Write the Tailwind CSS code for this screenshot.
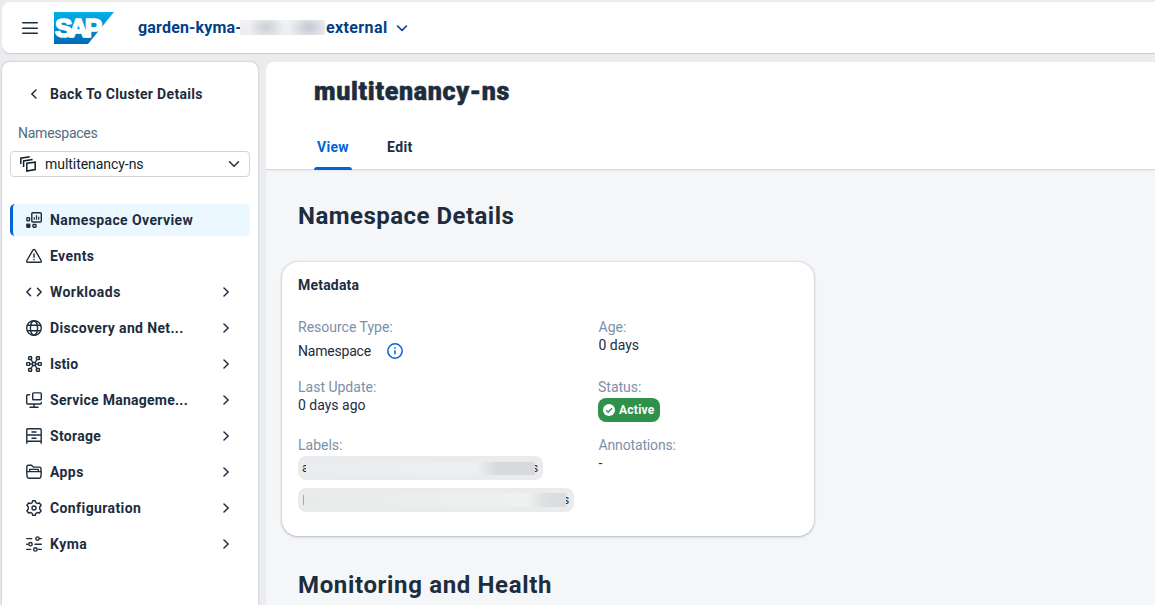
<!DOCTYPE html>
<html lang="en">
<head>
<meta charset="utf-8">
<title>multitenancy-ns</title>
<script src="https://cdn.jsdelivr.net/npm/@tailwindcss/browser@4"></script>
</head>
<body class="flex h-[605px] w-[1155px] flex-col overflow-hidden bg-[#ebecee] pl-[2px] pt-[2px] font-['Roboto',sans-serif] text-sm text-[#1d2d3e]">
<svg class="hidden">
  <symbol id="chev" viewBox="0 0 16 16"><path d="M6 4l4.200 4L6 12" fill="none" stroke="currentColor" stroke-width="1.500" stroke-linecap="round" stroke-linejoin="round"/></symbol>
</svg>
<header class="flex h-[51px] w-full shrink-0 items-center rounded-l-lg bg-white pl-5 shadow-[0_1px_1px_rgba(90,100,115,0.25)]">
  <svg class="size-4 shrink-0" viewBox="0 0 16 16" stroke="#1d2d3e" stroke-width="1.400" stroke-linecap="round"><path d="M.7 2.800h14.600M.7 8.300h14.600M.7 13.300h14.600"/></svg>
  <svg class="ml-4 h-8 w-[60px] shrink-0" viewBox="0 0 60 32">
    <defs><linearGradient id="sap" x1="0" y1="0" x2="0" y2="1"><stop offset="0" stop-color="#00b1eb"/><stop offset="1" stop-color="#0069b4"/></linearGradient></defs>
    <path d="M0 0h60L34 32H0z" fill="url(#sap)"/>
    <text x="1" y="25.200" textLength="47" lengthAdjust="spacing" font-family="Liberation Sans" font-weight="700" font-size="26" fill="#fff" stroke="#fff" stroke-width="1.700">SAP</text>
  </svg>
  <div class="ml-6 flex items-center text-base font-bold text-[#00408a]">
    <span class="w-[102px] whitespace-nowrap tracking-[0.18px]">garden-kyma-</span>
    <span class="h-[15px] w-[85px] bg-[radial-gradient(ellipse_18px_13px_at_31%_48%,#cbced3,transparent),radial-gradient(ellipse_20px_14px_at_81%_48%,#c5c9d0,transparent),linear-gradient(#f0f2f5,#ebedf1)]"></span>
    <span class="ml-px w-[63px] whitespace-nowrap tracking-[0.38px]">external</span>
    <svg class="ml-[5px] size-4" viewBox="0 0 16 16"><path d="M3.500 6L8 10.400 12.500 6" fill="none" stroke="currentColor" stroke-width="1.500" stroke-linecap="round" stroke-linejoin="round"/></svg>
  </div>
</header>
<div class="mt-[9px] flex min-h-0 flex-1 gap-2">
  <aside class="flex w-64 shrink-0 flex-col rounded-t-lg bg-white px-2 shadow-[0_0_2px_rgba(90,100,115,0.5)]">
    <div class="mt-4 flex h-8 items-center pl-4 font-bold">
      <svg class="mr-2 size-4 rotate-180"><use href="#chev"/></svg><span class="tracking-[0.32px]">Back To Cluster Details</span>
    </div>
    <div class="mt-[13px] h-5 pl-2 leading-5 tracking-[-0.25px] text-[#556b82]">Namespaces</div>
    <div class="mt-2 flex h-[26px] items-center rounded border border-[#d0d5db] pl-[9px] pr-[7px] text-[#131e29]">
      <svg class="size-4" viewBox="0 0 16 16" fill="none" stroke="#131e29" stroke-width="1.500"><path d="M.8 8V2.200l9-1.400M3.600 11V5l9-1.400M6.800 7.300l8.400-1.100v7.400l-8.400 1.500z"/></svg>
      <span class="ml-[9px] flex-1 tracking-[-0.05px]">multitenancy-ns</span>
      <svg class="size-4" viewBox="0 0 16 16"><path d="M3.500 5.800L8 10.200l4.500-4.400" fill="none" stroke="#1d2d3e" stroke-width="1.500" stroke-linecap="round" stroke-linejoin="round"/></svg>
    </div>
    <nav class="mt-[27px] flex flex-col gap-1 font-bold tracking-[0.4px]">
      <a class="flex h-8 items-center rounded-[5px] border-l-[3px] border-[#0064d9] bg-[#ebf8ff] pl-[13px]">
        <svg class="mr-2 size-4 shrink-0" viewBox="0 0 16 16" fill="none" stroke="currentColor" stroke-width="1.400"><rect x="5.800" y=".8" width="9.500" height="9.200" rx="1"/><path d="M8.300 7.800V5.200M10.500 7.800V3.200M12.700 7.800V4.800" stroke-width="1.200"/><rect x=".9" y="5.600" width="2.600" height="3.300" rx=".6"/><rect x=".8" y="12.300" width="3" height="3" rx=".6" fill="currentColor"/><rect x="7" y="12.500" width="3" height="2.700" rx=".6"/></svg>
        <span>Namespace Overview</span></a>
      <a class="flex h-8 items-center pl-4">
        <svg class="mr-2 size-4 shrink-0" viewBox="0 0 16 16" fill="none" stroke="currentColor" stroke-width="1.400" stroke-linecap="round" stroke-linejoin="round"><path d="M6.900 2.100L.9 12.500q-.7 1.800 1 1.800h12.200q1.700 0 1-1.800L9.100 2.100Q8 .700 6.900 2.100z"/><path d="M8 6v3.200M8 11.500v.2"/></svg>
        <span>Events</span></a>
      <a class="flex h-8 items-center pl-4 pr-4">
        <svg class="mr-2 size-4 shrink-0" viewBox="0 0 16 16" fill="none" stroke="currentColor" stroke-width="1.500" stroke-linecap="round" stroke-linejoin="round"><path d="M4.500 4.300L.9 8l3.600 3.700M11.500 4.300L15.100 8l-3.600 3.700"/></svg>
        <span class="flex-1 tracking-[0.45px]">Workloads</span><svg class="size-4"><use href="#chev"/></svg></a>
      <a class="flex h-8 items-center pl-4 pr-4">
        <svg class="mr-2 size-4 shrink-0" viewBox="0 0 16 16" fill="none" stroke="currentColor" stroke-width="1.400"><circle cx="8" cy="8" r="7.300"/><ellipse cx="8" cy="8" rx="3.600" ry="7.300"/><path d="M1.300 5.300h13.400M1.300 10.700h13.400"/></svg>
        <span class="flex-1 tracking-[0.36px]">Discovery and Net...</span><svg class="size-4"><use href="#chev"/></svg></a>
      <a class="flex h-8 items-center pl-4 pr-4">
        <svg class="mr-2 size-4 shrink-0" viewBox="0 0 16 16" fill="none" stroke="currentColor" stroke-width="1.400"><rect x="2.600" y=".7" width="3" height="2.800" rx=".6"/><rect x="10.400" y=".7" width="3" height="2.800" rx=".6"/><rect x=".7" y="6.600" width="3" height="2.800" rx=".6"/><rect x="12.300" y="6.600" width="3" height="2.800" rx=".6"/><rect x="2.600" y="12.500" width="3" height="2.800" rx=".6"/><rect x="10.400" y="12.500" width="3" height="2.800" rx=".6"/><rect x="6.500" y="6.500" width="3" height="3" rx=".6"/><path d="M5 3.500l1.800 3M11 3.500l-1.800 3M3.600 8h2.900M9.500 8h2.900M5 12.500l1.800-3M11 12.500l-1.800-3"/></svg>
        <span class="flex-1 tracking-[0.1px]">Istio</span><svg class="size-4"><use href="#chev"/></svg></a>
      <a class="flex h-8 items-center pl-4 pr-4">
        <svg class="mr-2 size-4 shrink-0" viewBox="0 0 16 16" fill="none" stroke="currentColor" stroke-width="1.400" stroke-linecap="round" stroke-linejoin="round"><rect x="6.700" y=".9" width="8.600" height="6.800" rx=".8"/><path d="M3.600 2.700H1.700q-1 0-1 1V11q0 1 1 1h12.600q1 0 1-1v-.6M8 12v3M4 15.200h8"/></svg>
        <span class="flex-1 tracking-[0.26px]">Service Manageme...</span><svg class="size-4"><use href="#chev"/></svg></a>
      <a class="flex h-8 items-center pl-4 pr-4">
        <svg class="mr-2 size-4 shrink-0" viewBox="0 0 16 16" fill="none" stroke="currentColor" stroke-width="1.400" stroke-linecap="round"><path d="M.8 15.300V1.700q0-1 1-1h12.400q1 0 1 1v13.600M.8 7h14.400M.8 13.300h14.400M6 4h4M6 10.200h4"/></svg>
        <span class="flex-1 tracking-[0.3px]">Storage</span><svg class="size-4"><use href="#chev"/></svg></a>
      <a class="flex h-8 items-center pl-4 pr-4">
        <svg class="mr-2 size-4 shrink-0" viewBox="0 0 16 16" fill="none" stroke="currentColor" stroke-width="1.400" stroke-linejoin="round"><path d="M.8 7.800V2.700q0-1.400 1.400-1.400h3.300l1.800 1.800h6.200q1.500 0 1.500 1.500v3.200M3.700 7.500V5.400h8.600v2.100"/><path d="M1.300 7.600h13.400q.6 0 .5.700l-.3 4.400q-.2 1.500-1.600 1.500H2.700q-1.400 0-1.600-1.500L.8 8.300q-.1-.7.5-.7z"/></svg>
        <span class="flex-1">Apps</span><svg class="size-4"><use href="#chev"/></svg></a>
      <a class="flex h-8 items-center pl-4 pr-4">
        <svg class="mr-2 size-4 shrink-0" viewBox="0 0 16 16" fill="none" stroke="currentColor" stroke-width="1.400" stroke-linejoin="round"><path d="M6.700.7h2.600l.6 2 1.400.8 2.100-.5 1.700 2.200L13.700 7v2l1.400 1.800-1.700 2.200-2.100-.5-1.400.8-.6 2H6.700l-.6-2-1.400-.8-2.100.5-1.700-2.200L2.300 9V7L.9 5.200 2.600 3l2.100.5 1.400-.8z"/><circle cx="8" cy="8" r="2"/></svg>
        <span class="flex-1">Configuration</span><svg class="size-4"><use href="#chev"/></svg></a>
      <a class="flex h-8 items-center pl-4 pr-4">
        <svg class="mr-2 size-4 shrink-0" viewBox="0 0 16 16" fill="none" stroke="currentColor" stroke-width="1.400" stroke-linecap="round"><path d="M.7 2.600h5M13.600 2.600h1.700M.7 8.200h1M9 8.200h6.300M.7 13.400h4M12 13.400h3.300"/><circle cx="11.500" cy="2.600" r="1.700"/><circle cx="4.500" cy="8.200" r="1.700"/><circle cx="9.400" cy="13.400" r="1.700"/></svg>
        <span class="flex-1 tracking-[0.5px]">Kyma</span><svg class="size-4"><use href="#chev"/></svg></a>
    </nav>
  </aside>
  <main class="flex min-w-0 flex-1 flex-col overflow-hidden rounded-tl-lg bg-[#f5f6f7]">
    <div class="flex h-[107px] shrink-0 flex-col bg-white pl-12 shadow-[0_1px_0_#d9d9d9,0_2px_2px_#e9ebed]">
      <h1 class="mt-[14px] h-8 text-[25px] font-black leading-8 tracking-[0.680px] [-webkit-text-stroke:0.500px_#1d2d3e]">multitenancy-ns</h1>
      <div class="mt-auto flex h-11 gap-[35px] font-bold leading-[44px]">
        <div class="relative w-[38px] pl-[3px] tracking-[0.300px] text-[#0064d9]">View<span class="absolute -bottom-px left-0 h-[3px] w-[38px] rounded-t-sm bg-[#0064d9]"></span></div>
        <div class="tracking-[0.400px]">Edit</div>
      </div>
    </div>
    <h2 class="ml-8 mt-[31px] h-8 text-2xl font-bold leading-8 tracking-[0.480px]">Namespace Details</h2>
    <section class="ml-4 mt-[30px] h-[274px] w-[532px] shrink-0 rounded-2xl bg-white px-4 pt-[13px] shadow-[0_0_2px_rgba(85,107,130,0.35),0_1px_3px_rgba(85,107,130,0.35)]">
      <h3 class="h-5 font-bold leading-5 tracking-[0.200px]">Metadata</h3>
      <div class="mt-[22px] grid grid-cols-[300px_1fr] grid-rows-[60px_58px_80px] leading-[18px]">
        <div class="pt-px"><div class="text-[#7b91a8]">Resource Type:</div><div class="mt-[6px] flex items-center"><span class="w-[89px] tracking-[-0.200px]">Namespace</span><svg class="size-4" viewBox="0 0 16 16" fill="none" stroke="#0064d9" stroke-width="1.500"><circle cx="8" cy="8" r="7.200"/><path d="M8 7.300v4M8 4.300v1.400"/></svg></div></div>
        <div class="pt-px pl-[0.500px]"><div class="text-[#7b91a8]">Age:</div><div>0 days</div></div>
        <div class="pt-px"><div class="text-[#7b91a8]">Last Update:</div><div>0 days ago</div></div>
        <div class="pt-px"><div class="text-[#7b91a8]">Status:</div>
          <div class="mt-[2px] flex h-6 w-[62px] items-center rounded-lg bg-[#30914c] pl-[5px] text-xs font-bold tracking-[0.250px] text-white"><svg class="mr-1 size-3" viewBox="0 0 12 12"><circle cx="6" cy="6" r="6" fill="#fff"/><path d="M3.200 6.200l2 2 3.800-4" fill="none" stroke="#30914c" stroke-width="1.300"/></svg><span>Active</span></div></div>
        <div class="pt-px"><div class="text-[#7b91a8]">Labels:</div>
          <div class="mt-[2px] flex h-6 w-[245px] items-center rounded-lg bg-[#eaebec] pl-1 text-xs">
            <span class="w-[4px]">a</span>
            <span class="z-10 h-[13px] w-[229px] bg-linear-to-r from-[#ebecee] from-0% via-[#eeeff0] via-74% to-[#d8d9da] to-84%"></span>
            <span class="-ml-[3px]">s</span></div>
          <div class="mt-2 flex h-6 w-[276px] items-center rounded-lg bg-[#eaebec] pl-[5px] text-xs">
            <span class="h-[10px] w-px bg-[#a5a8ab]"></span>
            <span class="z-10 h-[14px] w-[262px] bg-linear-to-r from-[#e9eaea] via-[#eff0f0] via-85% to-[#dcddde] to-93%"></span>
            <span class="-ml-[3px]">s</span></div></div>
        <div class="pt-px pl-[0.500px]"><div class="tracking-[-0.150px] text-[#7b91a8]">Annotations:</div><div>-</div></div>
      </div>
    </section>
    <h2 class="ml-8 mt-[33px] h-8 shrink-0 text-2xl font-bold leading-8 tracking-[0.650px]">Monitoring and Health</h2>
  </main>
</div>
</body>
</html>
